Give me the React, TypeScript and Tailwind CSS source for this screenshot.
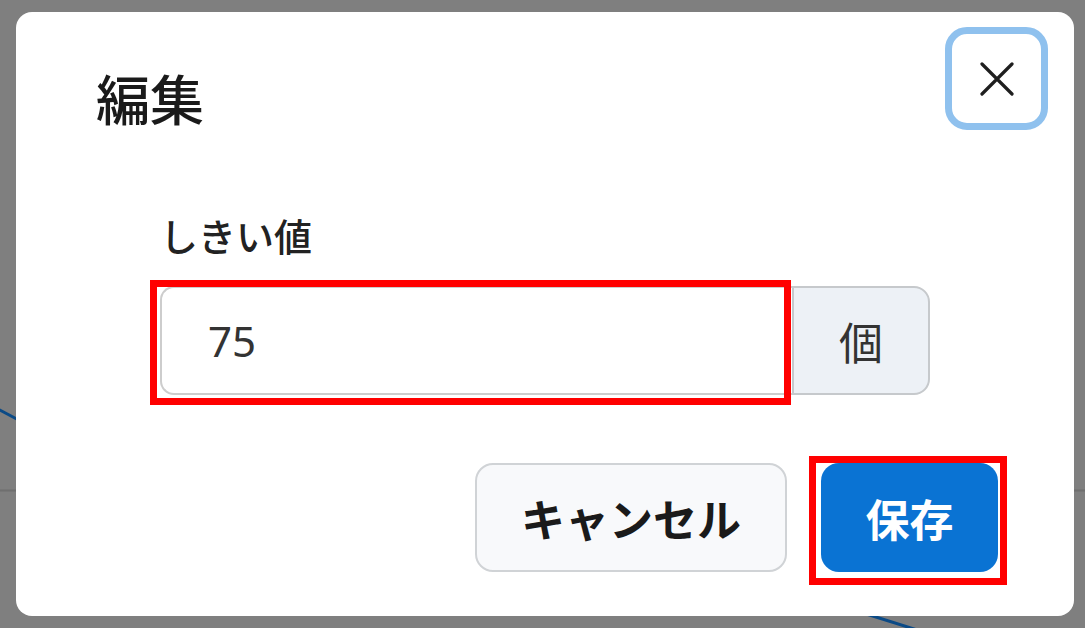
import React from "react";

const jp = { fontFamily: '"Noto Sans CJK JP", "Noto Sans", sans-serif' };
const latin = { fontFamily: '"Noto Sans", "Noto Sans CJK JP", sans-serif' };

export default function App() {
  return (
    <div className="relative w-[1085px] h-[628px] overflow-hidden bg-[#7f7f7f]" style={jp}>
      {/* dimmed page behind the modal */}
      <svg className="absolute inset-0" width="1085" height="628" viewBox="0 0 1085 628">
        <line x1="0" y1="490.5" x2="1085" y2="490.5" stroke="#6f6f6f" strokeWidth="2" />
        <line x1="-4" y1="408" x2="60" y2="442" stroke="#0b4a86" strokeWidth="3" />
        <line x1="860" y1="612" x2="930" y2="634" stroke="#0b4a86" strokeWidth="3" />
      </svg>

      <div className="relative pt-[12px] pl-[16px]">
        <div className="relative w-[1058px] h-[604px] bg-white rounded-[16px] flex flex-col">
          {/* header */}
          <div className="pl-[80px] pt-[54px]">
            <h2 className="text-[54px] leading-[64px] font-medium text-[#1a1a1a]">編集</h2>
          </div>
          <button className="absolute top-[15px] right-[26px] w-[103px] h-[103px] rounded-[22px] border-[7px] border-[#8fc1ee] bg-white flex items-center justify-center">
            <svg width="34" height="34" viewBox="0 0 34 34" fill="none" stroke="#1f1f1f" strokeWidth="3.2" strokeLinecap="round">
              <path d="M2 2 L32 32 M32 2 L2 32" />
            </svg>
          </button>

          {/* body */}
          <div className="pl-[144px] flex flex-col">
            <label className="mt-[81px] text-[38px] leading-[48px] font-medium text-[#222]">しきい値</label>
            <div className="mt-[27px] flex w-[770px] h-[109px]">
              <div className="flex-1 flex items-center border-2 border-r-0 border-[#cdcdcd] rounded-l-[14px] pl-[46px] bg-white">
                <span className="text-[42px] text-[#333]" style={latin}>75</span>
              </div>
              <div className="w-[138px] flex items-center justify-center border-2 border-[#c6c9cc] rounded-r-[16px] bg-[#edf1f6]">
                <span className="text-[44px] text-[#333]">個</span>
              </div>
            </div>
          </div>

          {/* footer */}
          <div className="mt-[68px] pr-[76px] flex justify-end gap-[34px]">
            <button className="w-[312px] h-[109px] rounded-[18px] border-2 border-[#d0d3d6] bg-[#f8f9fb] text-[44px] font-bold text-[#1a1a1a] flex items-center justify-center">
              キャンセル
            </button>
            <button className="w-[177px] h-[109px] rounded-[18px] bg-[#0a73d3] text-[44px] font-bold text-white flex items-center justify-center">
              保存
            </button>
          </div>

          {/* annotation boxes */}
          <div className="absolute left-[134px] top-[268px] w-[641px] h-[125px] border-[7px] border-[#ff0000] pointer-events-none" />
          <div className="absolute left-[793px] top-[444px] w-[198px] h-[129px] border-[7px] border-[#ff0000] pointer-events-none" />
        </div>
      </div>
    </div>
  );
}
